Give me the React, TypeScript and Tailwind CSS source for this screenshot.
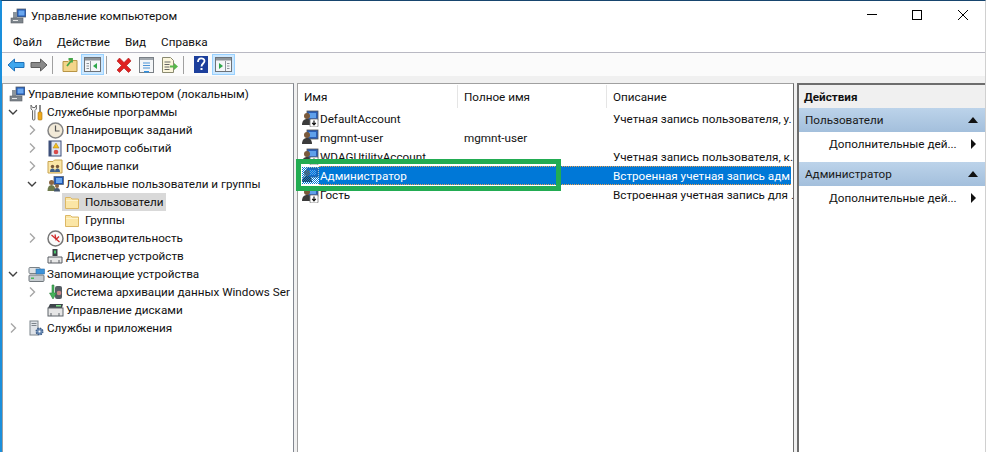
import type { ReactNode } from 'react';

const UserIcon = ({ down = false, selected = false }: { down?: boolean; selected?: boolean }) => (
    <svg width="17" height="17" viewBox="0 0 17 17" className="shrink-0">
        <defs>
            <pattern id="sel" width="2" height="2" patternUnits="userSpaceOnUse">
                <rect width="1" height="1" fill="#0078d7" />
                <rect x="1" y="1" width="1" height="1" fill="#0078d7" />
            </pattern>
        </defs>
        <rect x="5" y="1" width="11" height="9" fill="#2a5fb8" stroke="#555" strokeWidth="0.8" />
        <rect x="7" y="3" width="7" height="5" fill="#5fa0ea" />
        <circle cx="5" cy="6" r="3" fill="#7a5a3c" />
        <path d="M0 15c0-4 2-6 5-6s5 2 5 6z" fill="#3b3b3b" />
        {down && (
            <g>
                <rect x="8" y="9" width="8" height="8" rx="1" fill="#fff" stroke="#777" strokeWidth="0.8" />
                <path d="M12 10.500v4M10.200 12.800l1.800 2 1.800-2" fill="none" stroke="#111" strokeWidth="1.200" />
            </g>
        )}
        {selected && <rect width="17" height="17" fill="url(#sel)" />}
    </svg>
);

const ComputerIcon = () => (
    <svg width="16" height="16" viewBox="0 0 16 16" className="shrink-0">
        <rect x="7" y="1" width="9" height="8" fill="#1f56b4" stroke="#5c6670" strokeWidth="0.8" />
        <rect x="8.500" y="2.500" width="6" height="5" fill="#6aa7ee" />
        <rect x="3" y="4" width="4" height="6" fill="#8b949c" />
        <rect x="1" y="10" width="12" height="5" fill="#7d858c" stroke="#5a6066" strokeWidth="0.6" />
        <rect x="3" y="12" width="5" height="1" fill="#e8e8e8" />
    </svg>
);

const FolderIcon = () => (
    <svg width="16" height="15" viewBox="0 0 16 15" className="shrink-0">
        <path d="M1.500 2.500h5l1.500 1.500h6.500v9.500h-13z" fill="#fbe6a6" stroke="#dcb765" />
        <path d="M2 5.500h12" stroke="#fff3cc" />
    </svg>
);

const ToolsIcon = () => (
    <svg width="16" height="17" viewBox="0 0 16 17" className="shrink-0">
        <path d="M3 1v4l1.500 1.500V15a1.200 1.200 0 0 0 2.400 0V6.500L8.400 5V1L7 3.500H4.500z" fill="#f4f4f4" stroke="#6b6b6b" />
        <rect x="11" y="1" width="2" height="7" fill="#8a8a8a" />
        <rect x="10" y="8" width="4" height="8" rx="1" fill="#eeaa1e" stroke="#a87410" strokeWidth="0.6" />
    </svg>
);

const ClockIcon = () => (
    <svg width="17" height="17" viewBox="0 0 17 17" className="shrink-0">
        <circle cx="8.500" cy="8.500" r="7.500" fill="#f2ead8" stroke="#858585" strokeWidth="1.500" />
        <path d="M8.500 3.500v5.500h4" fill="none" stroke="#555" strokeWidth="1.200" />
    </svg>
);

const EventIcon = () => (
    <svg width="16" height="17" viewBox="0 0 16 17" className="shrink-0">
        <rect x="2" y="1" width="12" height="15" fill="#dfe6f2" stroke="#3d4f7a" />
        <rect x="2" y="1" width="2.500" height="15" fill="#3d4f7a" />
        <path d="M9 3l3 5H6z" fill="#f3c020" stroke="#a87a10" strokeWidth="0.5" />
        <circle cx="9" cy="12" r="2.300" fill="#d84a4a" />
    </svg>
);

const SharedIcon = () => (
    <svg width="16" height="15" viewBox="0 0 16 15" className="shrink-0">
        <path d="M1 2.500h5l1.500-1.500H15v13H1z" fill="#fbe6a6" stroke="#c8a450" />
        <circle cx="5.500" cy="7.500" r="1.700" fill="#77583a" />
        <circle cx="10.500" cy="7.500" r="1.700" fill="#77583a" />
        <path d="M3 13c0-2.500 1-3.500 2.500-3.500S8 10.500 8 13zM8 13c0-2.500 1-3.500 2.500-3.500S13 10.500 13 13z" fill="#3d5f8a" />
    </svg>
);

const GroupIcon = () => (
    <svg width="17" height="16" viewBox="0 0 17 16" className="shrink-0">
        <rect x="7" y="0.500" width="9.500" height="8" fill="#1f56b4" stroke="#5c6670" strokeWidth="0.8" />
        <rect x="9" y="2" width="6" height="5" fill="#6aa7ee" />
        <circle cx="4.500" cy="6.500" r="2.500" fill="#8a6644" />
        <path d="M0.500 15c0-4 1.500-6 4-6s4 2 4 6z" fill="#6d7a4c" />
        <circle cx="10" cy="10" r="2" fill="#8a6644" />
        <path d="M7 15.500c0-2.500 1-3.500 3-3.500s3 1 3 3.500z" fill="#44566e" />
    </svg>
);

const PerfIcon = () => (
    <svg width="17" height="17" viewBox="0 0 17 17" className="shrink-0">
        <circle cx="8.500" cy="8.500" r="7.500" fill="#fafafa" stroke="#777" strokeWidth="1.500" />
        <path d="M4.500 5l8 7M8 4.500l1 5 3-3" fill="none" stroke="#d02c2c" strokeWidth="1.300" />
    </svg>
);

const DeviceIcon = () => (
    <svg width="16" height="16" viewBox="0 0 16 16" className="shrink-0">
        <rect x="5.500" y="1" width="5" height="7" fill="#3a3f44" />
        <rect x="7" y="2.500" width="2" height="3" fill="#49c06a" />
        <path d="M1 9h14v6H1z" fill="#e8e8e8" stroke="#5a5f64" />
        <path d="M4 15v-3M12 15v-3" stroke="#5a5f64" />
    </svg>
);

const StorageIcon = () => (
    <svg width="17" height="17" viewBox="0 0 17 17" className="shrink-0">
        <rect x="1" y="1.500" width="11" height="6" rx="1" fill="#dfe3e6" stroke="#7b8287" />
        <rect x="8" y="3" width="8.500" height="5" fill="#3d93d9" stroke="#2e6ea8" strokeWidth="0.6" />
        <rect x="1" y="9" width="15" height="6.500" rx="1" fill="#c6ccd0" stroke="#70777c" />
        <rect x="3" y="11.500" width="3" height="1.500" fill="#4cb85c" />
    </svg>
);

const BackupIcon = () => (
    <svg width="17" height="17" viewBox="0 0 17 17" className="shrink-0">
        <rect x="8" y="2" width="7" height="13" rx="2" fill="#555c63" />
        <circle cx="12" cy="9" r="2.300" fill="#c98a8a" />
        <path d="M5 1v8H2.500l3.500 6 3.500-6H7V1z" fill="#45b45a" stroke="#2f8040" strokeWidth="0.6" />
    </svg>
);

const DiskIcon = () => (
    <svg width="17" height="16" viewBox="0 0 17 16" className="shrink-0">
        <path d="M3 2h13l-1 4H1z" fill="#3f454b" />
        <rect x="9" y="3" width="5" height="1.500" fill="#7fe08a" />
        <rect x="1" y="6" width="15" height="8" fill="#e6e6e6" stroke="#5f656a" />
        <path d="M4 14v-3M12 14v-3" stroke="#5f656a" />
    </svg>
);

const ServicesIcon = () => (
    <svg width="17" height="17" viewBox="0 0 17 17" className="shrink-0">
        <rect x="2" y="1" width="8" height="14" fill="#dfe3e8" stroke="#7d858c" />
        <path d="M3.500 3.500h5M3.500 5.500h5" stroke="#7d858c" />
        <circle cx="11.500" cy="11.500" r="3.200" fill="#6e8fb8" stroke="#3f5f8a" strokeWidth="1.600" strokeDasharray="1.500 1" />
        <circle cx="11.500" cy="11.500" r="1" fill="#fff" />
    </svg>
);

const Chevron = ({ open }: { open?: boolean }) => (
    <svg width="10" height="10" viewBox="0 0 10 10" className="shrink-0">
        {open ? (
            <path d="M1 3l4 4 4-4" fill="none" stroke="#404040" strokeWidth="1.400" />
        ) : (
            <path d="M3 0.500L7.500 5 3 9.500" fill="none" stroke="#a6a6a6" strokeWidth="1.400" />
        )}
    </svg>
);

interface TreeItem {
    label: string;
    icon: ReactNode;
    depth: number;
    chevron?: 'open' | 'closed';
    selected?: boolean;
}

const treeItems: TreeItem[] = [
    { label: 'Управление компьютером (локальным)', icon: <ComputerIcon />, depth: -1 },
    { label: 'Служебные программы', icon: <ToolsIcon />, depth: 0, chevron: 'open' },
    { label: 'Планировщик заданий', icon: <ClockIcon />, depth: 1, chevron: 'closed' },
    { label: 'Просмотр событий', icon: <EventIcon />, depth: 1, chevron: 'closed' },
    { label: 'Общие папки', icon: <SharedIcon />, depth: 1, chevron: 'closed' },
    { label: 'Локальные пользователи и группы', icon: <GroupIcon />, depth: 1, chevron: 'open' },
    { label: 'Пользователи', icon: <FolderIcon />, depth: 2, selected: true },
    { label: 'Группы', icon: <FolderIcon />, depth: 2 },
    { label: 'Производительность', icon: <PerfIcon />, depth: 1, chevron: 'closed' },
    { label: 'Диспетчер устройств', icon: <DeviceIcon />, depth: 1 },
    { label: 'Запоминающие устройства', icon: <StorageIcon />, depth: 0, chevron: 'open' },
    { label: 'Система архивации данных Windows Ser', icon: <BackupIcon />, depth: 1, chevron: 'closed' },
    { label: 'Управление дисками', icon: <DiskIcon />, depth: 1 },
    { label: 'Службы и приложения', icon: <ServicesIcon />, depth: 0, chevron: 'closed' },
];

function TreeRow({ item }: { item: TreeItem }) {
    const indent = { '-1': 'pl-[4px]', '0': 'pl-[5px]', '1': 'pl-[24px]', '2': 'pl-[59px]' }[String(item.depth)];
    return (
        <div className={`flex items-center h-[18px] whitespace-nowrap ${indent}`}>
            {item.depth >= 0 && item.depth < 2 && (
                <span className="w-[18px] shrink-0 flex">
                    {item.chevron && <Chevron open={item.chevron === 'open'} />}
                </span>
            )}
            <span className={`flex items-center h-[18px] ${item.selected ? 'bg-[#d9d9d9] pr-[3px]' : ''}`}>
                <span className={`${item.depth === 2 ? 'w-[23px]' : 'w-[21px]'} pl-[2px] shrink-0 flex`}>{item.icon}</span>
                <span>{item.label}</span>
            </span>
        </div>
    );
}

const users = [
    { name: 'DefaultAccount', full: '', desc: 'Учетная запись пользователя, у.', down: true },
    { name: 'mgmnt-user', full: 'mgmnt-user', desc: '' },
    { name: 'WDAGUtilityAccount', full: '', desc: 'Учетная запись пользователя, к.', down: true },
    { name: 'Администратор', full: '', desc: 'Встроенная учетная запись адм.', selected: true },
    { name: 'Гость', full: '', desc: 'Встроенная учетная запись для .', down: true },
];

function UserRow({ user }: { user: (typeof users)[number] }) {
    return (
        <div className="flex h-[19px] items-center whitespace-nowrap pl-[4px] mr-[2px]">
            <UserIcon down={user.down} selected={user.selected} />
            <div
                className={`flex flex-1 min-w-0 h-full items-center pl-[1px] ${user.selected ? 'bg-[#0078d7] text-white border-y border-dotted border-y-[#e8a050]' : ''}`}
            >
                <span className="w-[144px] shrink-0">{user.name}</span>
                <span className="w-[149px] shrink-0">{user.full}</span>
                <span>{user.desc}</span>
            </div>
        </div>
    );
}

function ToolButton({ active, children }: { active?: boolean; children: ReactNode }) {
    return (
        <span
            className={`w-[23px] h-[21px] flex items-center justify-center shrink-0 border ${active ? 'bg-[#cce8ff] border-[#99d1ff]' : 'border-transparent'}`}
        >
            {children}
        </span>
    );
}

const Sep = () => <span className="w-px h-[18px] bg-[#a0a0a0] ml-[2px] mr-[5px] shrink-0" />;

function ActionHeader({ title }: { title: string }) {
    return (
        <div className="h-[24px] flex items-center justify-between pl-[6px] pr-[7px] bg-gradient-to-b from-[#bcd3ea] to-[#a3bfdc] text-[#1a1a1a]">
            <span>{title}</span>
            <svg width="10" height="6" viewBox="0 0 10 6">
                <path d="M0 6l5-6 5 6z" fill="#111" />
            </svg>
        </div>
    );
}

function ActionItem() {
    return (
        <div className="h-[24px] flex items-center justify-between pl-[30px] pr-[9px]">
            <span>Дополнительные дей...</span>
            <svg width="5" height="10" viewBox="0 0 5 10">
                <path d="M0 0l5 5-5 5z" fill="#111" />
            </svg>
        </div>
    );
}

export default function App() {
    return (
        <div className="relative w-[986px] h-[452px] overflow-hidden flex flex-col bg-white border-t border-t-[#17456e] border-l-2 border-l-[#1a8fdc] border-r border-r-[#d0d0d0] text-[11.7px] leading-[18px] text-[#111] font-['Roboto','Noto_Sans',sans-serif]">
            {/* title bar */}
            <div className="h-[30px] flex items-center shrink-0 pl-[8px]">
                <ComputerIcon />
                <span className="ml-[5px]">Управление компьютером</span>
                <div className="ml-auto flex items-center text-black">
                    <svg width="46" height="30" viewBox="0 0 46 30">
                        <path d="M20 13.500h10" stroke="#000" />
                    </svg>
                    <svg width="46" height="30" viewBox="0 0 46 30">
                        <rect x="19.500" y="9.500" width="9" height="9" fill="none" stroke="#000" />
                    </svg>
                    <svg width="46" height="30" viewBox="0 0 46 30">
                        <path d="M19 9l10 10M29 9L19 19" stroke="#000" />
                    </svg>
                </div>
            </div>
            {/* menu */}
            <div className="h-[22px] flex items-center gap-[15px] pl-[11px] shrink-0 border-b border-b-[#b9b9c3]">
                <span>Файл</span>
                <span>Действие</span>
                <span>Вид</span>
                <span>Справка</span>
            </div>
            {/* toolbar */}
            <div className="h-[23px] flex items-center pl-[2px] shrink-0 bg-[#fbfbfb]">
                <ToolButton>
                    <svg width="18" height="14" viewBox="0 0 18 14">
                        <path d="M7.500 1L1 7l6.500 6V9.500H17v-5H7.500z" fill="#3fa7ee" stroke="#1e70b8" />
                    </svg>
                </ToolButton>
                <ToolButton>
                    <svg width="18" height="14" viewBox="0 0 18 14">
                        <path d="M10.500 1L17 7l-6.500 6V9.500H1v-5h9.500z" fill="#8a8a8a" stroke="#5d5d5d" />
                    </svg>
                </ToolButton>
                <Sep />
                <ToolButton>
                    <svg width="16" height="16" viewBox="0 0 16 16">
                        <path d="M1 4.500h5l1-1h8v11H1z" fill="#f3d58a" stroke="#b89445" />
                        <path d="M5 9l4-5M6.500 2H10v3.500" fill="none" stroke="#45a648" strokeWidth="1.800" />
                    </svg>
                </ToolButton>
                <ToolButton active>
                    <svg width="17" height="15" viewBox="0 0 17 15">
                        <rect x="0.500" y="0.500" width="16" height="14" fill="#f4f6f8" stroke="#6d7278" />
                        <rect x="1" y="1" width="15" height="2.500" fill="#8d949a" />
                        <path d="M6.500 4v10" stroke="#8d949a" />
                        <path d="M2.500 6.500h2.500M2.500 9h2.500M2.500 11.500h2.500" stroke="#8d949a" />
                        <path d="M13 6v6L9 9z" fill="#2ea84a" />
                    </svg>
                </ToolButton>
                <Sep />
                <ToolButton>
                    <svg width="18" height="18" viewBox="0 0 18 18">
                        <path d="M2 5l2.500-3L9 6.500 13.500 2 16 5l-4.500 4.500L16 14l-2.500 2.500L9 12l-4.500 4.500L2 14l4.500-4.500z" fill="#e02020" stroke="#a81818" strokeWidth="0.6" />
                    </svg>
                </ToolButton>
                <ToolButton>
                    <svg width="15" height="16" viewBox="0 0 15 16">
                        <rect x="0.500" y="0.500" width="14" height="15" fill="#f4f6f8" stroke="#7a8086" />
                        <rect x="1" y="1" width="13" height="2" fill="#a3a9af" />
                        <path d="M4 6h7M4 8.500h7M4 11h7" stroke="#4b93d6" />
                        <rect x="5" y="14" width="5" height="1.500" fill="#2f8fe0" />
                    </svg>
                </ToolButton>
                <ToolButton>
                    <svg width="17" height="16" viewBox="0 0 17 16">
                        <path d="M1.500 0.500h8l3 3v12h-11z" fill="#fbf6dc" stroke="#8a8a70" />
                        <path d="M3.500 5h6M3.500 7.500h5M3.500 10h5M3.500 12.500h5" stroke="#666" />
                        <path d="M9 8.500h4V6l4 3.500-4 3.500v-2.500H9z" fill="#56b84a" />
                    </svg>
                </ToolButton>
                <Sep />
                <ToolButton>
                    <svg width="14" height="17" viewBox="0 0 14 17">
                        <rect width="14" height="17" fill="#1c3f9c" />
                        <path d="M4 6c0-5 6.500-4.500 6.500-1 0 2.500-3 2.500-3 5.500" fill="none" stroke="#fff" strokeWidth="1.800" />
                        <rect x="6.500" y="12" width="2" height="2" fill="#fff" />
                    </svg>
                </ToolButton>
                <ToolButton active>
                    <svg width="17" height="15" viewBox="0 0 17 15">
                        <rect x="0.500" y="0.500" width="16" height="14" fill="#f4f6f8" stroke="#6d7278" />
                        <rect x="1" y="1" width="15" height="2.500" fill="#8d949a" />
                        <path d="M10.500 4v10" stroke="#8d949a" />
                        <path d="M12 6.500h2.500M12 9h2.500M12 11.500h2.500" stroke="#8d949a" />
                        <path d="M4 6v6l4-3z" fill="#2ea84a" />
                    </svg>
                </ToolButton>
            </div>
            {/* panes */}
            <div className="flex-1 min-h-0 flex gap-[3px] bg-[#f0f0f0] pt-[7px]">
                <div className="w-[292px] shrink-0 pt-[1px] bg-white border-t border-t-[#a0a0a0] border-l border-l-[#a0a0a0] border-r border-r-[#828790] overflow-hidden">
                    {treeItems.map((item) => (
                        <TreeRow key={item.label} item={item} />
                    ))}
                </div>
                <div className="w-[497px] shrink-0 bg-white border-t border-t-[#a0a0a0] border-l border-l-[#a0a0a0] border-r border-r-[#6d6d6d] overflow-hidden">
                    <div className="flex h-[25px] items-center">
                        <span className="w-[160px] pl-[6px] border-r border-r-[#e5e5e5] h-[23px] flex items-center">Имя</span>
                        <span className="w-[149px] pl-[6px] border-r border-r-[#e5e5e5] h-[23px] flex items-center">Полное имя</span>
                        <span className="pl-[6px]">Описание</span>
                    </div>
                    {users.map((u) => (
                        <UserRow key={u.name} user={u} />
                    ))}
                </div>
                <div className="flex-1 min-w-0 bg-white border-t-2 border-t-[#6d6d6d] border-l-2 border-l-[#6d6d6d] overflow-hidden">
                    <div className="h-[23px] flex items-center pl-[5px] font-bold bg-[#f0f0f0]">Действия</div>
                    <ActionHeader title="Пользователи" />
                    <ActionItem />
                    <div className="h-[6px]" />
                    <ActionHeader title="Администратор" />
                    <ActionItem />
                </div>
            </div>
            {/* annotation around the selected account */}
            <div className="absolute left-[294px] top-[158px] w-[265px] h-[32px] border-[5px] border-[#22ac52]" />
        </div>
    );
}
